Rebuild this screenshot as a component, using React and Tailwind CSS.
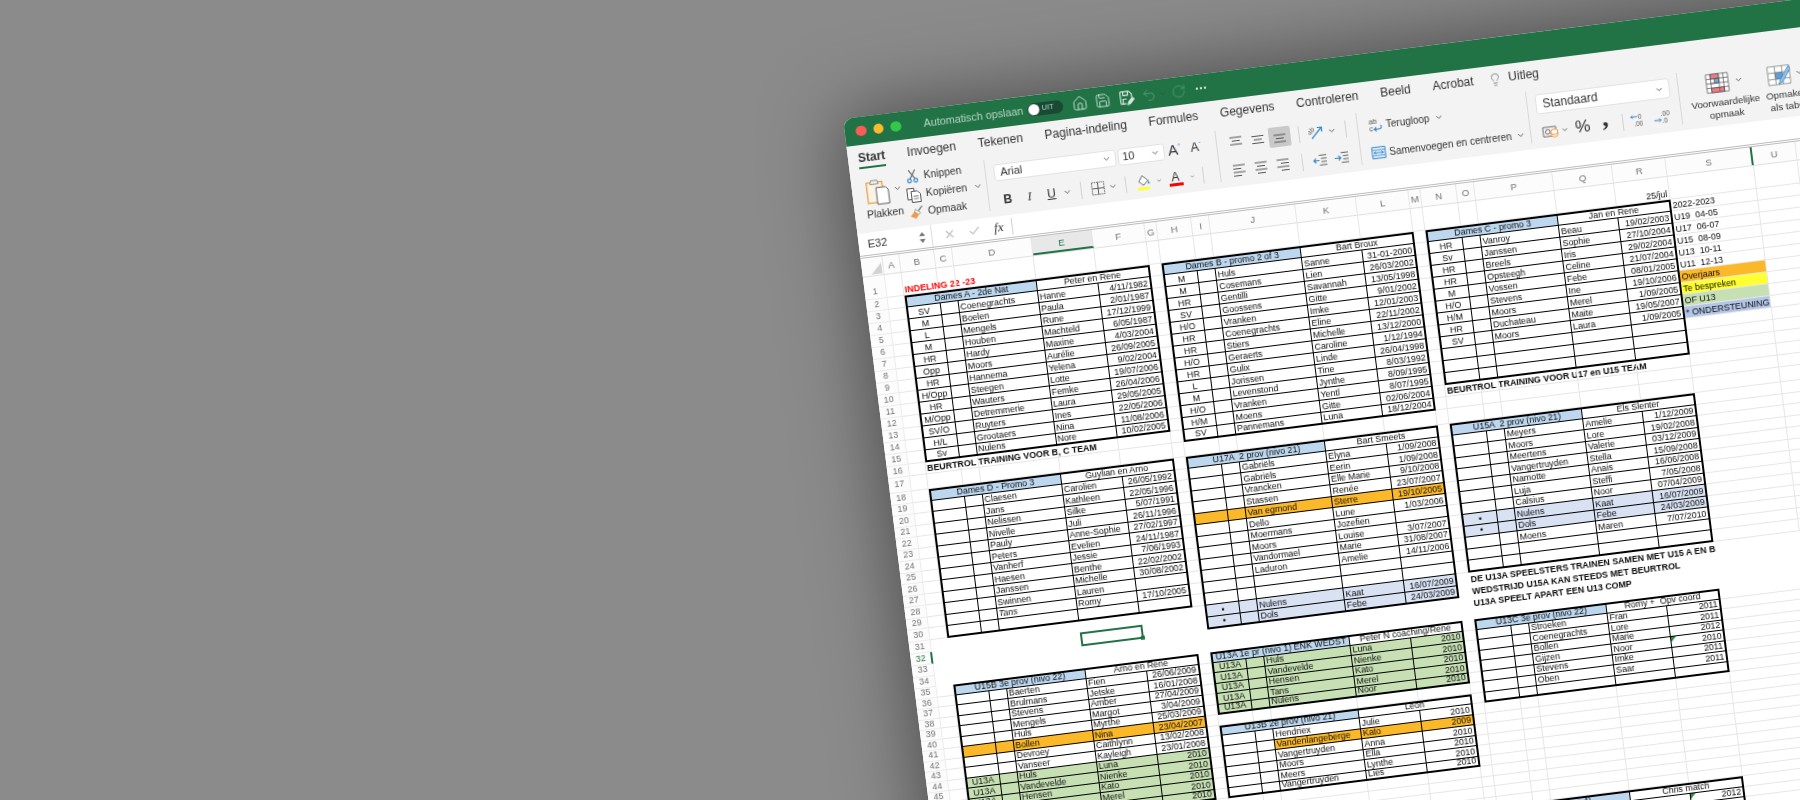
import clsx from 'clsx';
import { House, Save, Undo2, RotateCw, Ellipsis, ChevronDown, Lightbulb, X, Check } from 'lucide-react';

const COLS = [
  ['A', 16.5], ['B', 35], ['C', 18], ['D', 80], ['E', 61], ['F', 53], ['G', 12.5], ['H', 35], ['I', 18], ['J', 87], ['K', 61], ['L', 53],
  ['M', 12], ['N', 36], ['O', 18], ['P', 79], ['Q', 60], ['R', 54], ['S', 87], ['U', 44], ['V', 60], ['W', 60], ['X', 60],
];

// row heights differ a lot in the sheet, index 0 is row 1
const ROW_H = [23];
for (let r = 2; r <= 16; r++) ROW_H.push(12);
ROW_H.push(15);
for (let r = 18; r <= 30; r++) ROW_H.push(11.5);
ROW_H.push(12.5, 11.5, 12, 11.5);
for (let r = 35; r <= 62; r++) ROW_H.push(10.5);

const BLUE = 'bg-[#bdd7ee]';
const PALE = 'bg-[#d9e2f3]';
const ORANGE = 'bg-[#fbb929]';
const GREEN = 'bg-[#c6e0b4]';

const sheet = {};
const put = (r, c, cell) => { sheet[`${r}:${c}`] = { ...sheet[`${r}:${c}`], ...cell }; };

// c is the index of the first column of the table: pos, blank, name, first name, date
function table(r0, c, left, right, rows, nRows) {
  const total = nRows ?? rows.length;
  put(r0, c, { t: left, span: 3, bg: BLUE, align: 'center', ink: true, t2: true, l2: true });
  put(r0, c + 3, { t: right, span: 2, align: 'center', ink: true, t2: true, r2: true });
  for (let i = 0; i < total; i++) {
    const [pos = '', name = '', first = '', date = '', fill, fillFrom = 0, extra] = rows[i] ?? [];
    const r = r0 + 1 + i;
    const b2 = i === total - 1;
    [pos, '', name, first, date].forEach((t, k) => {
      put(r, c + k, {
        t,
        ink: true,
        align: k < 2 ? 'center' : k === 4 ? 'right' : 'left',
        bg: fill && k >= fillFrom ? fill : undefined,
        l2: k === 0,
        r2: k === 4,
        b2,
        italic: extra === 'italic' && k === 2,
        flag: extra === 'flag' && k === 4,
      });
    });
  }
}

table(2, 1, 'Dames A - 2de Nat', 'Peter en Rene', [
  ['SV', 'Coenegrachts', 'Hanne', '4/11/1982'], ['M', 'Boelen', 'Paula', '2/01/1987'], ['L', 'Mengels', 'Rune', '17/12/1999'],
  ['M', 'Houben', 'Machteld', '6/05/1987'], ['HR', 'Hardy', 'Maxine', '4/03/2004'], ['Opp', 'Moors', 'Aurélie', '26/09/2005'],
  ['HR', 'Hannema', 'Yelena', '9/02/2004'], ['H/Opp', 'Steegen', 'Lotte', '19/07/2006'], ['HR', 'Wauters', 'Femke', '26/04/2006'],
  ['M/Opp', 'Detremmerie', 'Laura', '29/05/2005'], ['SV/O', 'Ruyters', 'Ines', '22/05/2006'], ['H/L', 'Grootaers', 'Nina', '11/08/2006'],
  ['Sv', 'Nulens', 'Nore', '10/02/2005'],
]);
table(2, 7, 'Dames B - promo 2 of 3', 'Bart Broux', [
  ['M', 'Huls', 'Sanne', '31-01-2000'], ['M', 'Cosemans', 'Lien', '26/03/2002'], ['HR', 'Gentilli', 'Savannah', '13/05/1998'],
  ['SV', 'Goossens', 'Gitte', '9/01/2002'], ['H/O', 'Vranken', 'Imke', '12/01/2003'], ['HR', 'Coenegrachts', 'Eline', '22/11/2002'],
  ['HR', 'Stiers', 'Michelle', '13/12/2000'], ['H/O', 'Geraerts', 'Caroline', '1/12/1994'], ['HR', 'Gulix', 'Linde', '26/04/1998'],
  ['L', 'Jorissen', 'Tine', '8/03/1992'], ['M', 'Levenstond', 'Jynthe', '8/09/1995'], ['H/O', 'Vranken', 'Yentl', '8/07/1995'],
  ['H/M', 'Moens', 'Gitte', '02/06/2004'], ['SV', 'Pannemans', 'Luna', '18/12/2004'],
]);
table(2, 13, 'Dames C - promo 3', 'Jan en Rene', [
  ['HR', 'Vanroy', 'Beau', '19/02/2003'], ['Sv', 'Janssen', 'Sophie', '27/10/2004'], ['HR', 'Breels', 'Iris', '29/02/2004'],
  ['HR', 'Opsteegh', 'Celine', '21/07/2004'], ['M', 'Vossen', 'Febe', '08/01/2005'], ['H/O', 'Stevens', 'Ine', '19/10/2006'],
  ['H/M', 'Moors', 'Merel', '1/09/2005'], ['HR', 'Duchateau', 'Maite', '19/05/2007'], ['SV', 'Moors', 'Laura', '1/09/2005'],
], 12);
table(18, 1, 'Dames D - Promo 3', 'Guylian en Arno', [
  ['', 'Claesen', 'Carolien', '26/05/1992'], ['', 'Jans', 'Kathleen', '22/05/1996'], ['', 'Nelissen', 'Silke', '5/07/1991'],
  ['', 'Nivelle', 'Juli', '26/11/1996'], ['', 'Pauly', 'Anne-Sophie', '27/02/1997'], ['', 'Peters', 'Evelien', '24/11/1987'],
  ['', 'Vanherf', 'Jessie', '7/06/1993'], ['', 'Haesen', 'Benthe', '22/02/2002'], ['', 'Janssen', 'Michelle', '30/08/2002'],
  ['', 'Swinnen', 'Lauren', ''], ['', 'Tans', 'Romy', '17/10/2005', undefined, 0, 'italic'],
], 12);
table(18, 7, 'U17A  2 prov (nivo 21)', 'Bart Smeets', [
  ['', 'Gabriëls', 'Elyna', '1/09/2008'], ['', 'Gabriëls', 'Eerin', '1/09/2008'], ['', 'Vrancken', 'Elle Marie', '9/10/2008'],
  ['', 'Stassen', 'Renée', '23/07/2007'], ['', 'Van egmond', 'Sterre', '19/10/2005', ORANGE], ['', 'Dello', 'Lune', '1/03/2006'],
  ['', 'Moermans', 'Jozefien', ''], ['', 'Moors', 'Louise', '3/07/2007'], ['', 'Vandormael', 'Marie', '31/08/2007'],
  ['', 'Laduron', 'Amelie', '14/11/2006'], [], [], ['•', 'Nulens', 'Kaat', '16/07/2009', PALE], ['•', 'Dols', 'Febe', '24/03/2009', PALE],
]);
table(18, 13, 'U15A  2 prov (nivo 21)', 'Els Slenter', [
  ['', 'Meyers', 'Amelie', '1/12/2009'], ['', 'Moors', 'Lore', '19/02/2008'], ['', 'Meertens', 'Valerie', '03/12/2009'],
  ['', 'Vangertruyden', 'Stella', '15/09/2008'], ['', 'Namotte', 'Anais', '16/06/2008'], ['', 'Luja', 'Steffi', '7/05/2008'],
  ['', 'Calsius', 'Noor', '07/04/2009'], ['•', 'Nulens', 'Kaat', '16/07/2009', PALE], ['•', 'Dols', 'Febe', '24/03/2009', PALE],
  ['', 'Moens', 'Maren', '7/07/2010'],
], 12);
table(35, 1, 'U15B 3e prov (nivo 22)', 'Arno en Rene', [
  ['', 'Baerten', 'Fien', '26/06/2009'], ['', 'Brulmans', 'Jetske', '16/01/2008'], ['', 'Stevens', 'Amber', '27/04/2009'],
  ['', 'Mengels', 'Margot', '3/04/2009'], ['', 'Huls', 'Myrthe', '25/03/2009'], ['', 'Bollen', 'Nina', '23/04/2007', ORANGE],
  ['', 'Devroey', 'Caithlynn', '13/02/2008'], ['', 'Vanseer', 'Kayleigh', '23/01/2008'], ['U13A', 'Huls', 'Luna', '2010', GREEN],
  ['U13A', 'Vandevelde', 'Nienke', '2010', GREEN], ['U13A', 'Hensen', 'Kato', '2010', GREEN], ['U13A', 'Tans', 'Merel', '2010', GREEN],
  ['U13A', 'Nulens', 'Noor', '2010', GREEN],
]);
table(35, 7, 'U13A 1e pr (nivo 1) ENK WEDST', 'Peter N coaching/Rene', [
  ['U13A', 'Huls', 'Luna', '2010', GREEN], ['U13A', 'Vandevelde', 'Nienke', '2010', GREEN], ['U13A', 'Hensen', 'Kato', '2010', GREEN],
  ['U13A', 'Tans', 'Merel', '2010', GREEN], ['U13A', 'Nulens', 'Noor', '2010', GREEN],
]);
table(42, 7, 'U13B 2e prov (nivo 21)', 'Leon', [
  ['', 'Hendriex', 'Julie', '2010'], ['', 'Vandenlangeberge', 'Kato', '2009', ORANGE, 2], ['', 'Vangertruyden', 'Anna', '2010'],
  ['', 'Moors', 'Ella', '2010'], ['', 'Meers', 'Lynthe', '2010'], ['', 'Vangertruyden', 'Lies', '2010'],
]);
table(35, 13, 'U13C 3e prov (nivo 22)', 'Romy +  Opv coord', [
  ['', 'Stroeken', 'Fran', '2011'], ['', 'Coenegrachts', 'Lore', '2011'], ['', 'Bollen', 'Marie', '2012'],
  ['', 'Gijzen', 'Noor', '2010', undefined, 0, 'flag'], ['', 'Stevens', 'Imke', '2011'], ['', 'Oben', 'Saar', '2011'],
], 7);
table(53, 13, 'U11A (nivo 4)', 'Chris match', [['', '', '', '2012', undefined, 0, 'flag'], [], [], [], [], [], [], []]);

put(1, 1, { t: 'INDELING 22 -23', bold: true, color: 'text-[#fe0000]', size: 'text-[9px]', free: true });
put(1, 17, { t: '25/jul', align: 'right' });
put(16, 1, { t: 'BEURTROL TRAINING VOOR B, C TEAM', bold: true, free: true });
put(15, 13, { t: 'BEURTROL TRAINING VOOR U17 en U15 TEAM', bold: true, free: true });
put(31, 13, { t: 'DE U13A SPEELSTERS TRAINEN SAMEN MET U15 A EN B', bold: true, free: true });
put(32, 13, { t: 'WEDSTRIJD U15A KAN STEEDS MET BEURTROL', bold: true, free: true });
put(33, 13, { t: 'U13A SPEELT APART EEN U13 COMP', bold: true, free: true });
['2022-2023', 'U19  04-05', 'U17  06-07', 'U15  08-09', 'U13  10-11', 'U11  12-13'].forEach((t, i) => put(2 + i, 18, { t }));
put(8, 18, { t: 'Overjaars', bg: ORANGE });
put(9, 18, { t: 'Te bespreken', bg: 'bg-[#ffff33]' });
put(10, 18, { t: 'OF U13', bg: GREEN });
put(11, 18, { t: '* ONDERSTEUNING', bg: 'bg-[#b4c6e7]' });
put(32, 4, { selected: true });

function SheetCell({ cell, width, height, row }) {
  const bare = row >= 31 && row <= 34 && !cell.ink;
  return (
    <div
      style={{ width, height }}
      className={clsx(
        'relative flex shrink-0 items-end whitespace-pre px-[1.5px]',
        cell.size ?? 'text-[8.9px]',
        'leading-[9px]',
        cell.color ?? 'text-[#0c0c0c]',
        cell.align === 'center' && 'justify-center',
        cell.align === 'right' && 'justify-end',
        cell.bg,
        cell.bold && 'font-bold',
        cell.italic && 'italic',
        cell.ink && 'border-black',
        cell.ink && (cell.r2 ? 'border-r-2' : 'border-r'),
        cell.ink && (cell.b2 ? 'border-b-2' : 'border-b'),
        cell.ink && cell.l2 && 'border-l-2',
        cell.ink && cell.t2 && 'border-t-2',
        !cell.ink && !bare && 'border-r border-b border-[#e6e6e6]',
      )}
    >
      {cell.t}
      {cell.flag && (
        <span className="absolute left-0 top-0 size-0 border-t-[5px] border-r-[5px] border-t-[#2a8a3e] border-r-transparent" />
      )}
      {cell.selected && (
        <span className="absolute -inset-px border-2 border-[#217346]">
          <span className="absolute -right-[3px] -bottom-[3px] size-[4px] bg-[#217346]" />
        </span>
      )}
    </div>
  );
}

function SheetRow({ row, height }) {
  const cells = [];
  for (let c = 0; c < COLS.length; c++) {
    const cell = sheet[`${row}:${c}`] ?? {};
    const span = cell.span ?? 1;
    let width = 0;
    for (let k = 0; k < span; k++) width += COLS[c + k][1];
    cells.push(<SheetCell key={c} cell={cell} width={width} height={height} row={row} />);
    c += span - 1;
  }
  const current = row === 32;
  return (
    <div className="flex" style={{ height }}>
      <div
        className={clsx(
          'flex w-[22px] shrink-0 justify-center border-r border-b border-[#ececec] bg-[#fcfcfc] text-[8.8px]',
          row === 1 ? 'items-end pb-[2px] leading-[9px]' : 'items-center',
          current ? 'border-r-2 border-r-[#217346] text-[#217346]' : 'text-[#707070]',
        )}
      >
        {row}
      </div>
      {cells}
    </div>
  );
}

function ColumnHeader() {
  return (
    <div className="flex h-[19px] border-b border-[#e0e0e0] bg-[#fcfcfc] text-[9.6px] text-[#727272]">
      <div className="flex w-[22px] shrink-0 items-end justify-end border-r border-[#e6e6e6] p-px">
        <span className="size-0 border-b-[11px] border-l-[11px] border-b-[#d2d2d2] border-l-transparent" />
      </div>
      {COLS.map(([name, width]) => (
        <div
          key={name}
          style={{ width }}
          className={clsx(
            'flex shrink-0 items-center justify-center border-r border-[#e6e6e6] pt-[3px]',
            name === 'E' && 'border-b-2 border-b-[#217346] bg-[#e8e8e8] text-[#217346]',
            name === 'S' && 'border-r-2 border-r-[#217346]',
          )}
        >
          {name}
        </div>
      ))}
    </div>
  );
}

function Chev({ className }) {
  return <ChevronDown className={clsx('size-[9px] text-[#444444]', className)} strokeWidth={2.2} />;
}

function Sep({ className }) {
  return <span className={clsx('block h-[17px] w-px bg-[#d2d2d2]', className)} />;
}

function Slot({ className, children }) {
  return <div className={clsx('flex h-full shrink-0 items-center justify-center', className)}>{children}</div>;
}

function SaveAsIcon() {
  return (
    <svg viewBox="0 0 18 18" className="size-[17px]" fill="none" stroke="#d9e8df" strokeWidth="1.2">
      <path d="M3 2h9l3 3v4M9 15H4a1 1 0 0 1-1-1V2" />
      <path d="M6 2v4h5V2M5.5 15v-5h4" />
      <path d="M10.5 16l.6-2.4 4.5-4.5 1.7 1.7-4.5 4.6z" fill="#d9e8df" />
    </svg>
  );
}

function PasteIcon() {
  return (
    <svg viewBox="0 0 28 30" className="h-[30px] w-[26px]" fill="none">
      <path d="M3 5h17v22H3z" fill="#fbf3e6" stroke="#e7a14c" strokeWidth="1.4" />
      <path d="M8 3h7l1 4H7z" fill="#eeeeee" stroke="#8a8a8a" />
      <path d="M13 11h10l3 3v15H13z" fill="#ffffff" stroke="#555555" />
    </svg>
  );
}

function ScissorsIcon() {
  return (
    <svg viewBox="0 0 14 16" className="h-[15px] w-[13px]" fill="none">
      <path d="M3.5 1l6 9.5M10.5 1l-6 9.5" stroke="#555555" strokeWidth="1.1" />
      <circle cx="3.6" cy="12.6" r="2" stroke="#2f83c9" strokeWidth="1.2" />
      <circle cx="10.4" cy="12.6" r="2" stroke="#2f83c9" strokeWidth="1.2" />
    </svg>
  );
}

function CopyIcon() {
  return (
    <svg viewBox="0 0 16 16" className="size-[16px]" fill="none" stroke="#555555" strokeWidth="1">
      <path d="M1.5 1.5h7v11h-7z" fill="#ffffff" />
      <path d="M5.5 4.5h6l3 3v8h-9z" fill="#ffffff" />
      <path d="M7.5 9.5h5M7.5 12h5" strokeWidth=".8" />
    </svg>
  );
}

function BrushIcon() {
  return (
    <svg viewBox="0 0 16 16" className="size-[15px]" fill="none">
      <path d="M9.5 6.5l4.5-5 1 1-4.5 5z" fill="#777777" />
      <path d="M7 5l5 4-2 2-4-4z" fill="#ffffff" stroke="#777777" strokeWidth=".8" />
      <path d="M6 7l4 4-3 4-6-3c2-1 3-3 5-5z" fill="#f09a4a" />
    </svg>
  );
}

function BordersIcon() {
  return (
    <svg viewBox="0 0 16 16" className="size-[15px]" fill="none" stroke="#555555">
      <path d="M1.5 1.5h13v13h-13z" strokeDasharray="1.5 1" />
      <path d="M8 1.5v13M1.5 8h13" />
    </svg>
  );
}

function FillIcon() {
  return (
    <svg viewBox="0 0 16 18" className="h-[17px] w-[15px]" fill="none">
      <path d="M7 1.5l5.5 5.5-5 5-4.5-4.5z" fill="#ffffff" stroke="#555555" />
      <path d="M12.5 6l2 4-2 1z" fill="#2f83c9" />
      <path d="M1 14h13v3H1z" fill="#ffff33" />
    </svg>
  );
}

function LinesIcon({ widths, y = 3 }) {
  return (
    <svg viewBox="0 0 14 14" className="size-[14px]" stroke="#555555" strokeWidth="1">
      {widths.map(([a, b], i) => (
        <path key={i} d={`M${a} ${y + i * 3.5}H${b}`} />
      ))}
    </svg>
  );
}

function OrientIcon() {
  return (
    <svg viewBox="0 0 16 16" className="size-[16px]">
      <text x="0" y="8" fontSize="7" fill="#555555" transform="rotate(-40 4 8)">ab</text>
      <path d="M3 14L13 4M9 3.5h4.5V8" fill="none" stroke="#2f83c9" strokeWidth="1.2" />
    </svg>
  );
}

function IndentIcon({ flip }) {
  return (
    <svg viewBox="0 0 16 14" className="h-[13px] w-[15px]" fill="none">
      <path d="M7 1.5h8M9 5h6M9 8.5h6M7 12h8" stroke="#555555" />
      {flip ? <path d="M0 7h6M4 4.5L6.5 7 4 9.5" stroke="#2f83c9" strokeWidth="1.2" /> : <path d="M7 7H1M3.5 4.5L1 7l2.5 2.5" stroke="#2f83c9" strokeWidth="1.2" />}
    </svg>
  );
}

function WrapIcon() {
  return (
    <svg viewBox="0 0 15 16" className="h-[16px] w-[15px]">
      <text x="1" y="7" fontSize="7.5" fill="#555555">ab</text>
      <text x="1" y="14" fontSize="7.5" fill="#555555">c</text>
      <path d="M6 12.5h5.5a2 2 0 0 0 1-3.5M8 10.5l-2 2 2 2" fill="none" stroke="#2f83c9" strokeWidth="1.1" />
    </svg>
  );
}

function MergeIcon() {
  return (
    <svg viewBox="0 0 16 14" className="h-[14px] w-[15px]" fill="none">
      <path d="M1 1h14v12H1z" fill="#e3f0fa" stroke="#2f83c9" />
      <path d="M1 4h14M1 10h14" stroke="#2f83c9" strokeWidth=".8" />
      <path d="M3 7h10M5 5.5L3 7l2 1.5M11 5.5L13 7l-2 1.5" stroke="#2f83c9" />
    </svg>
  );
}

function CurrencyIcon() {
  return (
    <svg viewBox="0 0 18 14" className="h-[13px] w-[17px]" fill="none">
      <path d="M1 2h14v10H1z" stroke="#666666" />
      <circle cx="6" cy="7" r="2.5" stroke="#666666" />
      <ellipse cx="13" cy="6.5" rx="3.5" ry="1.6" fill="#ffffff" stroke="#e98a2e" />
      <path d="M9.5 6.5v5c0 2 7 2 7 0v-5M9.5 9c0 2 7 2 7 0" stroke="#e98a2e" fill="#ffffff" />
    </svg>
  );
}

function DecimalIcon({ more }) {
  return (
    <svg viewBox="0 0 20 16" className="h-[16px] w-[19px]">
      <text x={more ? 8 : 9} y="6.5" fontSize="7" fill="#555555">{more ? '.00' : '0'}</text>
      <text x={more ? 9 : 4} y="14.5" fontSize="7" fill="#555555">{more ? '.0' : '.00'}</text>
      {more ? (
        <path d="M1 11h7M6 9l2 2-2 2" fill="none" stroke="#2f83c9" />
      ) : (
        <path d="M8 4H1M3 2L1 4l2 2" fill="none" stroke="#2f83c9" />
      )}
    </svg>
  );
}

function CondFormatIcon() {
  return (
    <svg viewBox="0 0 26 24" className="h-[22px] w-[24px]" fill="none" stroke="#555555" strokeWidth=".8">
      <path d="M1 2h24v20H1z" fill="#ffffff" />
      <path d="M6 2h9v5H6z" fill="#f27b87" />
      <path d="M6 12h4V7h5v5h-5" fill="#6ea9dc" />
      <path d="M6 17h14v5H6z" fill="#f27b87" />
      <path d="M1 7h24M1 12h24M1 17h24M6 2v20M15 2v20M20 2v20" />
    </svg>
  );
}

function TableFormatIcon() {
  return (
    <svg viewBox="0 0 26 24" className="h-[22px] w-[24px]" fill="none" stroke="#777777" strokeWidth=".8">
      <path d="M1 2h24v20H1z" fill="#ffffff" />
      <path d="M9 9h8v7H9z" fill="#57a0dd" />
      <path d="M1 9h24M1 16h24M9 2v20M17 2v20" />
      <path d="M24 3L14 17l-2 5 5-3L26 6z" fill="#8fc1ea" stroke="#3d7fb6" />
    </svg>
  );
}

function TitleBar() {
  return (
    <div className="flex h-[28px] items-center bg-[#217346] pl-[11px] text-[#d9e8df]">
      <div className="flex gap-[7px]">
        <span className="size-[10.5px] rounded-full bg-[#fc5b57]" />
        <span className="size-[10.5px] rounded-full bg-[#fdbc2e]" />
        <span className="size-[10.5px] rounded-full bg-[#34c84a]" />
      </div>
      <span className="ml-[23px] w-[97px] whitespace-nowrap text-[10.8px] text-[#b8d4c4]">Automatisch opslaan</span>
      <span className="ml-[7px] flex h-[13px] w-[36px] items-center rounded-full bg-[#1a4a33] pl-px">
        <span className="size-[11px] rounded-full bg-white" />
        <span className="ml-[3px] text-[7.5px] text-[#b8d4c4]">UIT</span>
      </span>
      <House className="ml-[9px] size-[16px]" strokeWidth={1.3} />
      <Save className="ml-[7.5px] size-[16px]" strokeWidth={1.3} />
      <span className="ml-[7px]"><SaveAsIcon /></span>
      <Undo2 className="ml-[7px] size-[15px] text-[#5f9c7c]" strokeWidth={1.3} />
      <Chev className="ml-[2px] text-[#5f9c7c]" />
      <RotateCw className="ml-[4px] size-[15px] text-[#5f9c7c]" strokeWidth={1.2} />
      <Ellipsis className="ml-[8px] size-[14px]" strokeWidth={2} />
    </div>
  );
}

function Tabs() {
  return (
    <div className="flex h-[27px] items-start gap-[22px] pl-[10px] pt-[6px] text-[12px] leading-[15px] text-[#333333]">
      <span className="border-b-[2.5px] border-[#217346] pb-px font-bold">Start</span>
      <span>Invoegen</span>
      <span>Tekenen</span>
      <span>Pagina-indeling</span>
      <span>Formules</span>
      <span>Gegevens</span>
      <span>Controleren</span>
      <span>Beeld</span>
      <span>Acrobat</span>
      <span className="-ml-[7px] flex items-center gap-[6px]">
        <Lightbulb className="size-[14px] text-[#666666]" strokeWidth={1.2} />
        <span>Uitleg</span>
      </span>
    </div>
  );
}

function ClipboardGroup() {
  return (
    <div className="flex h-[52px] w-[134.5px] shrink-0 border-r border-[#d8d8d8] pl-[12px] text-[10.4px] text-[#333333]">
      <div className="flex w-[40px] flex-col">
        <div className="flex h-[33px] items-center pt-[3px]">
          <PasteIcon />
          <Chev className="ml-[3px] -mt-[2px]" />
        </div>
        <span className="w-[34px] text-center">Plakken</span>
      </div>
      <div className="-mt-[1px] flex flex-col gap-px">
        <div className="flex h-[18px] items-center gap-[3px]"><Slot className="w-[18px]"><ScissorsIcon /></Slot>Knippen</div>
        <div className="flex h-[18px] items-center gap-[3px]"><Slot className="w-[18px]"><CopyIcon /></Slot>Kopiëren<Chev className="ml-[3px]" /></div>
        <div className="flex h-[18px] items-center gap-[3px]"><Slot className="w-[18px]"><BrushIcon /></Slot>Opmaak</div>
      </div>
    </div>
  );
}

function FontGroup() {
  return (
    <div className="flex h-[52px] w-[233.5px] shrink-0 flex-col gap-2 border-r border-[#d8d8d8] pl-[8px] pt-1 text-[#333333]">
      <div className="flex h-[20px] items-center">
        <div className="flex h-[17px] w-[123px] items-center justify-between rounded-[3px] border border-[#e2e2e2] bg-white pl-[6px] pr-[4px] text-[11px]">Arial<Chev /></div>
        <div className="ml-[2px] flex h-[17px] w-[47px] items-center justify-between rounded-[3px] border border-[#e2e2e2] bg-white pl-[4px] pr-[4px] text-[11px]">10<Chev /></div>
        <Slot className="w-[21px] text-[15px]">A<span className="mb-[7px] text-[6px] text-[#2f83c9]">^</span></Slot>
        <Slot className="w-[22px] text-[12.5px]">A<span className="mb-[6px] text-[6px] text-[#2f83c9]">ˇ</span></Slot>
      </div>
      <div className="flex h-[20px] items-center text-[12px]">
        <Slot className="w-[22px] font-bold">B</Slot>
        <Slot className="w-[22px] font-['Liberation_Serif'] italic">I</Slot>
        <Slot className="w-[22px] underline">U</Slot>
        <Slot className="w-[10px]"><Chev /></Slot>
        <Slot className="w-[17px]"><Sep /></Slot>
        <Slot className="w-[17px]"><BordersIcon /></Slot>
        <Slot className="w-[14px]"><Chev /></Slot>
        <Slot className="w-[12px]"><Sep /></Slot>
        <Slot className="w-[24px]"><FillIcon /></Slot>
        <Slot className="w-[6px]"><Chev /></Slot>
        <Slot className="w-[28px]">
          <span className="flex w-[14px] flex-col items-center border-b-[3px] border-[#ff0000] text-[12px] leading-[12px]">A</span>
        </Slot>
        <Slot className="w-[5px]"><Chev /></Slot>
        <Slot className="w-[18px]"><Sep /></Slot>
      </div>
    </div>
  );
}

function AlignGroup() {
  return (
    <div className="flex h-[52px] w-[142px] shrink-0 flex-col gap-2 border-r border-[#d8d8d8] pl-[8px] pt-1">
      <div className="flex h-[20px] items-center">
        <Slot className="w-[22px]"><LinesIcon widths={[[1, 13], [3, 11], [1, 13]]} y={2} /></Slot>
        <Slot className="w-[22px]"><LinesIcon widths={[[1, 13], [3, 11], [1, 13]]} y={3.5} /></Slot>
        <Slot className="w-[22px] rounded-[2px] bg-[#c9c9c9]"><LinesIcon widths={[[1, 13], [3, 11], [1, 13]]} y={5} /></Slot>
        <Slot className="w-[16px]"><Sep /></Slot>
        <Slot className="w-[20px]"><OrientIcon /></Slot>
        <Slot className="w-[10px]"><Chev /></Slot>
        <Slot className="w-[18px]"><Sep /></Slot>
      </div>
      <div className="flex h-[20px] items-center">
        <Slot className="w-[22px]"><LinesIcon widths={[[1, 13], [1, 9], [1, 13], [1, 9]]} y={2} /></Slot>
        <Slot className="w-[22px]"><LinesIcon widths={[[1, 13], [3, 11], [1, 13], [3, 11]]} y={2} /></Slot>
        <Slot className="w-[22px]"><LinesIcon widths={[[1, 13], [5, 13], [1, 13], [5, 13]]} y={2} /></Slot>
        <Slot className="w-[16px]"><Sep /></Slot>
        <Slot className="w-[20px]"><IndentIcon /></Slot>
        <Slot className="w-[24px]"><IndentIcon flip /></Slot>
      </div>
    </div>
  );
}

function WrapGroup() {
  return (
    <div className="flex h-[52px] w-[171px] shrink-0 flex-col gap-2 border-r border-[#d8d8d8] pl-[10px] pt-1 text-[10px] text-[#333333]">
      <div className="flex h-[20px] items-center gap-[3px]"><WrapIcon />Terugloop<Chev className="ml-[2px]" /></div>
      <div className="flex h-[20px] items-center gap-[3px] whitespace-nowrap"><MergeIcon />Samenvoegen en centreren<Chev className="ml-[2px]" /></div>
    </div>
  );
}

function NumberGroup() {
  return (
    <div className="flex h-[52px] w-[152px] shrink-0 flex-col gap-2 border-r border-[#d8d8d8] pl-[8px] pt-1 text-[#333333]">
      <div className="flex h-[20px] w-[135px] items-center justify-between rounded-[3px] border border-[#e2e2e2] bg-white pl-[6px] pr-[5px] text-[12px]">Standaard<Chev /></div>
      <div className="flex h-[20px] items-center">
        <Slot className="w-[22px]"><CurrencyIcon /></Slot>
        <Slot className="w-[8px]"><Chev /></Slot>
        <Slot className="w-[28px] text-[17px]">%</Slot>
        <Slot className="w-[18px] pb-[12px] font-['Liberation_Serif'] text-[26px] font-bold leading-[14px]">,</Slot>
        <Slot className="w-[16px]"><Sep /></Slot>
        <Slot className="w-[18px]"><DecimalIcon /></Slot>
        <Slot className="w-[28px]"><DecimalIcon more /></Slot>
      </div>
    </div>
  );
}

function StylesGroup() {
  return (
    <div className="flex h-[52px] shrink-0 pl-[10px] text-center text-[9.8px] leading-[11.5px] text-[#333333]">
      <div className="flex w-[70px] flex-col items-center">
        <div className="flex h-[31px] items-center gap-[5px] pl-[2px]"><CondFormatIcon /><Chev /></div>
        Voorwaardelijke<br />opmaak
      </div>
      <div className="ml-[2px] flex w-[50px] flex-col items-center">
        <div className="flex h-[33px] items-center gap-[4px]"><TableFormatIcon /><Chev /></div>
        <span className="whitespace-nowrap">Opmaken</span>
        als tabel
      </div>
    </div>
  );
}

function FormulaBar() {
  return (
    <div className="flex h-[25px] items-center border-b-[3px] border-double border-[#bcbcbc] bg-white text-[#333333]">
      <div className="flex h-full w-[74px] shrink-0 items-center justify-between border-r border-[#dddddd] pl-[9px] pr-[6px] text-[11px]">
        E32
        <span className="flex flex-col gap-[3px]">
          <span className="size-0 border-x-[3.5px] border-b-[4px] border-x-transparent border-b-[#777777]" />
          <span className="size-0 border-x-[3.5px] border-t-[4px] border-x-transparent border-t-[#777777]" />
        </span>
      </div>
      <Slot className="ml-[5px] w-[24px]"><X className="size-[13px] text-[#bdbdbd]" strokeWidth={2} /></Slot>
      <Slot className="w-[26px]"><Check className="size-[13px] text-[#bdbdbd]" strokeWidth={2} /></Slot>
      <Slot className="w-[24px] font-['Liberation_Serif'] text-[13px] italic">fx</Slot>
      <Sep className="ml-[1px] h-[14px]" />
    </div>
  );
}

export default function App() {
  return (
    <div className="relative h-[800px] w-[1800px] overflow-hidden bg-[#8b8b8b] font-['Liberation_Sans',sans-serif]">
      {/* the excel window is a single tilted object lying on the grey page */}
      <div className="absolute left-[843px] top-[119px] w-[1100px] origin-top-left -rotate-[7.15deg] overflow-hidden rounded-t-[9px] bg-white shadow-[0_0_80px_rgba(0,0,0,0.5)]">
        <div className="blur-[0.35px]">
          <TitleBar />
          <div className="bg-[#f3f3f3]">
            <Tabs />
            <div className="flex h-[61px] pt-[3px]">
              <ClipboardGroup />
              <FontGroup />
              <AlignGroup />
              <WrapGroup />
              <NumberGroup />
              <StylesGroup />
            </div>
          </div>
          <FormulaBar />
          <ColumnHeader />
          {ROW_H.map((h, i) => (
            <SheetRow key={i} row={i + 1} height={h} />
          ))}
        </div>
      </div>
    </div>
  );
}
